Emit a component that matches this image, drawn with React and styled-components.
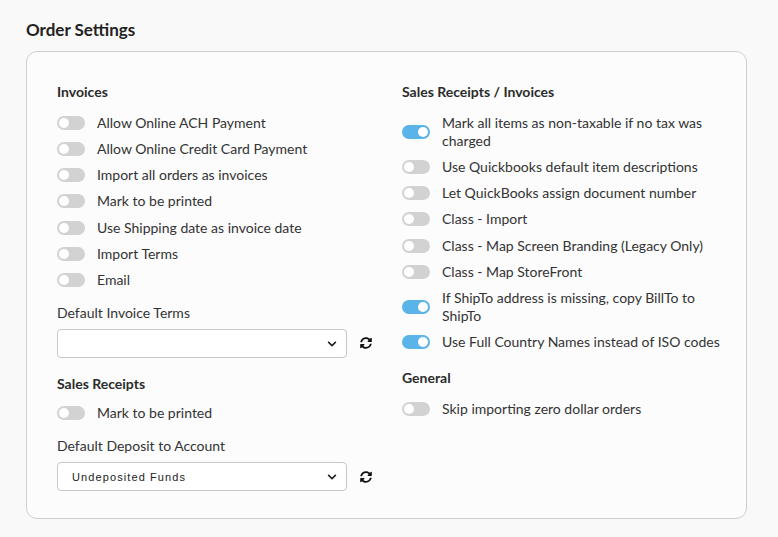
import React, { useState } from 'react';
import styled, { createGlobalStyle } from 'styled-components';
import { FaSyncAlt, FaChevronDown } from 'react-icons/fa';

const GlobalStyle = createGlobalStyle`
    body {
        margin: 0;
        background: #f9f9f9;
        font-family: Lato, "Open Sans", sans-serif;
        color: #333;
    }
`;

const Page = styled.div`
    padding: 19px 0 18px 26px;
`;

const Title = styled.h2`
    margin: 0 0 10px;
    font-size: 17px;
    line-height: 22px;
    font-weight: 700;
    color: #222;
`;

const Panel = styled.div`
    width: 721px;
    box-sizing: border-box;
    border: 1px solid #cfcfcf;
    border-radius: 11px;
    background: #fcfcfc;
    padding: 30px 20px 27px 30px;
    display: grid;
    grid-template-columns: 315px 1fr;
    column-gap: 30px;
    align-items: start;
`;

const Column = styled.div`
    display: flex;
    flex-direction: column;
`;

const Heading = styled.h3`
    margin: ${(p) => p.$top || 0}px 0 ${(p) => p.$bottom ?? 12}px;
    font-size: 14px;
    line-height: 20px;
    font-weight: 700;
    color: #2b2b2b;
`;

const Row = styled.label`
    display: flex;
    align-items: center;
    gap: 12px;
    margin-bottom: 8.15px;
    font-size: 14px;
    line-height: 18px;
    color: #333;
    cursor: pointer;
`;

const Track = styled.span`
    position: relative;
    flex: 0 0 28px;
    height: 14px;
    border-radius: 7px;
    background: ${(p) => (p.$on ? '#5ab4e8' : '#d2d2d2')};

    &::after {
        content: '';
        position: absolute;
        top: 2px;
        left: ${(p) => (p.$on ? '16px' : '2px')};
        width: 10px;
        height: 10px;
        border-radius: 50%;
        background: #fff;
    }
`;

const FieldLabel = styled.div`
    margin: 7px 0 7px;
    font-size: 14px;
    line-height: 18px;
    color: #333;
`;

const SelectLine = styled.div`
    display: flex;
    align-items: center;
    gap: 13px;
`;

const SelectWrap = styled.div`
    position: relative;
    width: 290px;

    svg {
        position: absolute;
        right: 10px;
        top: 10px;
        color: #222;
        pointer-events: none;
    }
`;

const Select = styled.select`
    appearance: none;
    width: 100%;
    height: 29px;
    box-sizing: border-box;
    border: 1px solid #c8c8c8;
    border-radius: 4px;
    background: #fff;
    padding: 0 24px 0 14px;
    font-family: "Liberation Sans", Arial, sans-serif;
    font-size: 11px;
    letter-spacing: 1.1px;
    color: #222;
    outline: none;
`;

const Refresh = styled.span`
    display: flex;
    color: #111;
    cursor: pointer;
`;

const Toggle = ({ label, initial = false }) => {
    const [on, setOn] = useState(initial);
    return (
        <Row onClick={() => setOn(!on)}>
            <Track $on={on} />
            <span>{label}</span>
        </Row>
    );
};

const SelectField = ({ label, options }) => (
    <>
        <FieldLabel>{label}</FieldLabel>
        <SelectLine>
            <SelectWrap>
                <Select defaultValue={options[0]}>
                    {options.map((o) => (
                        <option key={o}>{o}</option>
                    ))}
                </Select>
                <FaChevronDown size={10} />
            </SelectWrap>
            <Refresh>
                <FaSyncAlt size={12} />
            </Refresh>
        </SelectLine>
    </>
);

const invoiceToggles = [
    'Allow Online ACH Payment',
    'Allow Online Credit Card Payment',
    'Import all orders as invoices',
    'Mark to be printed',
    'Use Shipping date as invoice date',
    'Import Terms',
    'Email',
];

const receiptInvoiceToggles = [
    ['Mark all items as non-taxable if no tax was charged', true],
    ['Use Quickbooks default item descriptions', false],
    ['Let QuickBooks assign document number', false],
    ['Class - Import', false],
    ['Class - Map Screen Branding (Legacy Only)', false],
    ['Class - Map StoreFront', false],
    ['If ShipTo address is missing, copy BillTo to ShipTo', true],
    ['Use Full Country Names instead of ISO codes', true],
];

const App = () => (
    <Page>
        <GlobalStyle />
        <Title>Order Settings</Title>
        <Panel>
            <Column>
                <Heading>Invoices</Heading>
                {invoiceToggles.map((t) => (
                    <Toggle key={t} label={t} />
                ))}
                <SelectField label="Default Invoice Terms" options={['']} />
                <Heading $top={16} $bottom={10}>
                    Sales Receipts
                </Heading>
                <Toggle label="Mark to be printed" />
                <SelectField
                    label="Default Deposit to Account"
                    options={['Undeposited Funds']}
                />
            </Column>
            <Column>
                <Heading>Sales Receipts / Invoices</Heading>
                {receiptInvoiceToggles.map(([t, on]) => (
                    <Toggle key={t} label={t} initial={on} />
                ))}
                <Heading $top={9}>General</Heading>
                <Toggle label="Skip importing zero dollar orders" />
            </Column>
        </Panel>
    </Page>
);

export default App;
